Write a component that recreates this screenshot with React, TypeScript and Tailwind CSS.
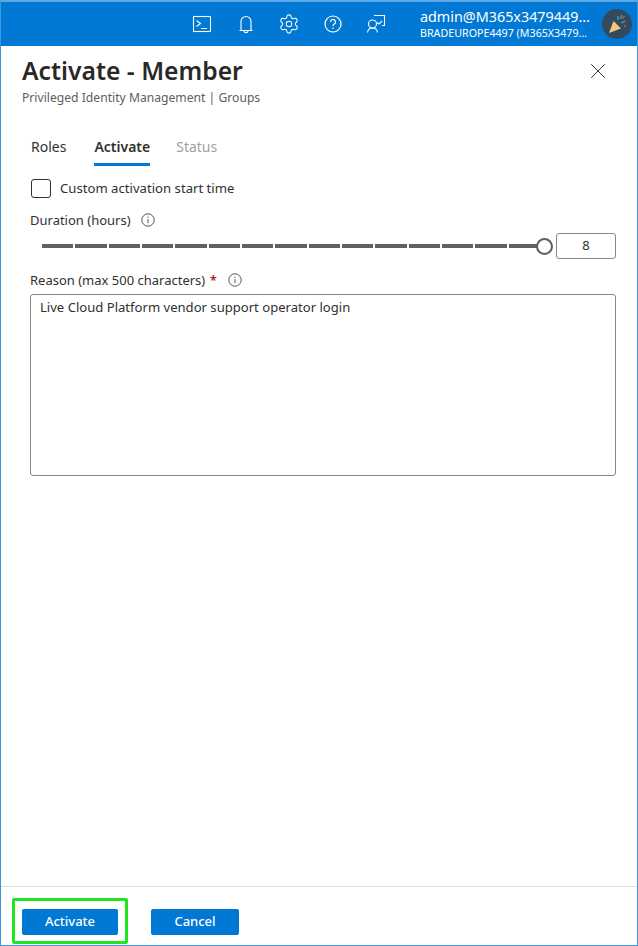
import React from 'react';
import { X, Settings } from 'lucide-react';

const font = { fontFamily: '"Noto Sans", "Open Sans", sans-serif' };

const InfoIcon = () => (
  <svg width="14" height="14" viewBox="0 0 14 14" fill="none" stroke="#444" strokeWidth="0.9">
    <circle cx="7" cy="7" r="6.2" />
    <path d="M7 6v4.200M7 3.500v1.300" />
  </svg>
);

const HeaderIcons = () => (
  <div className="flex items-center gap-[19.5px] text-white">
    <svg width="24" height="24" viewBox="0 0 24 24" fill="none" stroke="currentColor" strokeWidth="1.1">
      <rect x="3.500" y="4.500" width="17" height="15" />
      <path d="M6.500 8.500l4 3-4 3M11 16.500h6" />
    </svg>
    <svg width="24" height="24" viewBox="0 0 24 24" fill="none" stroke="currentColor" strokeWidth="1.1">
      <path d="M7 18V9.500a5 5 0 0 1 10 0V18M5.500 18.500h13M10 19c0 2.200 4 2.200 4 0" />
    </svg>
    <Settings size={22} strokeWidth={1.15} className="mx-[1px]" />
    <svg width="24" height="24" viewBox="0 0 24 24" fill="none" stroke="currentColor" strokeWidth="1.2">
      <circle cx="12" cy="12" r="8" />
      <path d="M9.500 10a2.500 2.500 0 1 1 3.800 2.100c-.9.600-1.300 1-1.300 2M12 15.600v1.400" />
    </svg>
    <svg width="24" height="24" viewBox="0 0 24 24" fill="none" stroke="currentColor" strokeWidth="1.1">
      <path d="M10 3.500h10.500v10H18M13 10.500l2 1.500 3-3" />
      <circle cx="8.500" cy="12" r="4" />
      <path d="M3.500 20.500c.4-3 2-4.500 5-4.500s4.600 1.500 5 4.500" />
    </svg>
  </div>
);

const Avatar = () => (
  <div className="flex h-[30px] w-[30px] shrink-0 items-center justify-center rounded-full bg-[#34495e]">
    <svg width="24" height="24" viewBox="0 0 24 24">
      <path d="M4 21l4.500-12 7.500 7.500z" fill="#f2c879" />
      <path d="M13 4v4M17 3l-1.500 4M20 9l-3.500 2" stroke="#4fb3a5" strokeWidth="1.2" />
      <path d="M19 14h2M18 6l1.500-1.500" stroke="#c86f8a" strokeWidth="1.2" />
    </svg>
  </div>
);

const Slider = () => (
  <div className="flex flex-1 items-center pl-3">
    <div className="mr-[-4px] flex flex-1 gap-[2px]">
      {Array.from({ length: 15 }).map((_, i) => (
        <div key={i} className="h-[4px] flex-1 bg-[#616161]" />
      ))}
    </div>
    <div className="relative h-[17px] w-[17px] shrink-0 rounded-full border-2 border-[#605e5c] bg-white" />
  </div>
);

const App: React.FC = () => {
  return (
    <div
      style={font}
      className="flex h-[946px] w-[638px] flex-col overflow-hidden border-x border-t-2 border-b border-x-[#3a96dd] border-t-[#5aa9e6] border-b-[#3a96dd] bg-white text-[#323130]"
    >
      <header className="flex h-[44px] shrink-0 items-center justify-end bg-[#0078d4] pr-[5px] text-white">
        <HeaderIcons />
        <div className="ml-[32px] mr-[10px] w-[172px] overflow-hidden whitespace-nowrap">
          <div className="text-[14.35px] leading-[19px]">admin@M365x3479449...</div>
          <div className="text-[10.7px] leading-[15px]">BRADEUROPE4497 (M365X3479...</div>
        </div>
        <Avatar />
      </header>

      <div className="flex flex-1 flex-col px-[21px]">
        <div className="flex items-start justify-between pt-[8px]">
          <div>
            <h1 className="text-[24.7px] font-semibold leading-[34px] text-[#292827]">Activate - Member</h1>
            <p className="mt-[1px] text-[12.15px] leading-[17px] text-[#605e5c]">Privileged Identity Management | Groups</p>
          </div>
          <X className="mr-[5px] mt-[4px] text-[#323130]" size={26} strokeWidth={0.9} />
        </div>

        <nav className="mt-[25px] flex gap-[27px] pl-[9px] text-[14px]">
          <span className="pt-[6px] leading-[20px]">Roles</span>
          <span className="ml-[1px] mr-[-1px] border-b-[3px] border-[#0078d4] pb-[6px] pt-[6px] font-semibold leading-[20px]">Activate</span>
          <span className="pt-[6px] leading-[20px] text-[#a19f9d]">Status</span>
        </nav>

        <div className="ml-[8px] flex flex-col">
          <label className="mt-[12px] flex items-center gap-[9px] text-[13.15px] leading-[20px]">
            <span className="ml-[1px] h-[19px] w-[20px] rounded-[3px] border border-[#323130]" />
            Custom activation start time
          </label>

          <div className="mt-[13px] flex items-center gap-[10px] text-[13px] leading-[18px]">
            Duration (hours)
            <InfoIcon />
          </div>

          <div className="mt-[4px] flex items-center gap-[3px]">
            <Slider />
            <div className="flex h-[26px] w-[60px] items-center justify-center rounded-[3px] border border-[#8a8886] text-[13px]">8</div>
          </div>

          <div className="mt-[12px] flex items-center gap-[11px] text-[13px] leading-[18px]">
            <span>
              Reason (max 500 characters) <span className="ml-[1px] font-semibold text-[#a4262c]">*</span>
            </span>
            <InfoIcon />
          </div>

          <div className="mt-[5px] h-[182px] rounded-[3px] border border-[#8a8886] px-[9px] py-[3px] text-[13.08px] leading-[18px]">
            Live Cloud Platform vendor support operator login
          </div>
        </div>
      </div>

      <footer className="flex h-[59px] shrink-0 items-end border-t border-[#e1dfdd] pb-[1px] pl-[11px]">
        <div className="rounded-[2px] border-[3px] border-[#22e51f] px-[7px] pb-[6px] pt-[8px]">
          <button className="block h-[26px] w-[96px] rounded-[2px] bg-[#0078d4] text-[13px] font-medium text-white">Activate</button>
        </div>
        <button className="mb-[9px] ml-[23px] h-[26px] w-[88px] rounded-[2px] bg-[#0078d4] text-[13px] font-medium text-white">Cancel</button>
      </footer>
    </div>
  );
};

export default App;
